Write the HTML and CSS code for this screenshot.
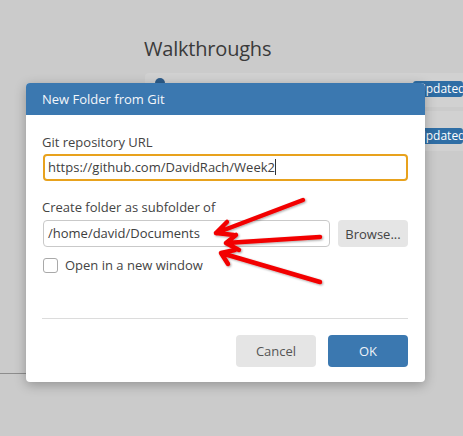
FILE: index.html
```html
<!DOCTYPE html>
<html>
<head>
<meta charset="utf-8">
<link rel="stylesheet" href="styles.css">
</head>
<body>
<div class="page">
  <div class="bg">
    <h1 class="bg-title">Walkthroughs</h1>
    <div class="bg-list">
      <div class="bg-row"><span class="bg-dot"></span><span class="badge">Updated</span></div>
      <div class="bg-row bg-row2"><span class="badge">Updated</span></div>
    </div>
    <div class="bg-rule"></div>
  </div>

  <div class="dialog">
    <div class="dialog-head">New Folder from Git</div>
    <div class="dialog-body">
      <label class="field-label">Git repository URL</label>
      <div class="input focused">https://github.com/DavidRach/Week2<span class="caret"></span></div>
      <label class="field-label second">Create folder as subfolder of</label>
      <div class="row">
        <div class="input path">/home/david/Documents</div>
        <button class="btn browse">Browse...</button>
      </div>
      <div class="check-row">
        <span class="checkbox"></span>
        <span class="check-label">Open in a new window</span>
      </div>
      <div class="sep"></div>
      <div class="actions">
        <button class="btn cancel">Cancel</button>
        <button class="btn ok">OK</button>
      </div>
    </div>
  </div>

  <svg class="arrows" width="463" height="436" viewBox="0 0 463 436">
    <defs>
      <filter id="sh" x="-20%" y="-20%" width="140%" height="140%">
        <feDropShadow dx="1" dy="1" stdDeviation="0.8" flood-color="#000" flood-opacity="0.35"/>
      </filter>
    </defs>
    <g fill="none" stroke="#f20000" stroke-width="4.5" stroke-linecap="round" stroke-linejoin="round" filter="url(#sh)">
      <path d="M303 200 L216 233 M216 233 L227 222 M216 233 L234 235"/>
      <path d="M320 237 L226 243 M226 243 L236 235 M226 243 L239 250"/>
      <path d="M320 282 L221 253 M221 253 L235 250 M221 253 L228 264"/>
    </g>
  </svg>
</div>
</body>
</html>
```

FILE: styles.css
```css
* { box-sizing: border-box; }
html, body { margin: 0; padding: 0; }
body {
  background: #cbcbcb;
  font-family: "Open Sans", "Noto Sans", sans-serif;
  color: #444;
}
.page {
  position: relative;
  width: 463px;
  height: 436px;
  overflow: hidden;
}
.bg {
  padding-top: 36px;
}
.bg-title {
  margin: 0 0 0 144px;
  font-size: 20px;
  font-weight: 400;
  line-height: 26px;
  color: #3a3a3a;
  letter-spacing: -0.2px;
}
.bg-list {
  margin: 11px 0 0 145px;
  display: flex;
  flex-direction: column;
  gap: 4px;
}
.bg-row {
  position: relative;
  height: 34px;
  background: #d1d1d1;
  border-radius: 4px 0 0 4px;
  display: flex;
  justify-content: flex-end;
  align-items: flex-start;
  padding-top: 8px;
}
.bg-row2 {
  height: 40px;
  padding-top: 17px;
}
.bg-dot {
  position: absolute;
  left: 10px;
  top: 5px;
  width: 10px;
  height: 10px;
  border-radius: 50%;
  background: #2d5c8a;
}
.badge {
  background: #2f6ea5;
  color: #fff;
  font-size: 12px;
  line-height: 16px;
  padding: 0 4px;
  border-radius: 3px;
  width: 50px;
  white-space: nowrap;
  overflow: hidden;
}
.bg-rule {
  margin-top: 222px;
  height: 1px;
  width: 120px;
  background: #8d8d8d;
}

.dialog {
  position: absolute;
  left: 26px;
  top: 83px;
  width: 399px;
  height: 299px;
  background: #fff;
  border-radius: 4px;
  overflow: hidden;
  box-shadow: 0 3px 12px rgba(0,0,0,0.28);
}
.dialog-head {
  height: 32px;
  background: #3b78b0;
  color: #f3f6fa;
  font-size: 13px;
  line-height: 32px;
  padding-left: 16px;
}
.dialog-body {
  padding: 18px 17px 0 17px;
  display: flex;
  flex-direction: column;
}
.field-label {
  font-size: 13px;
  line-height: 18px;
  color: #444;
  margin-left: -1px;
}
.field-label.second {
  margin-top: 17px;
}
.input {
  margin-top: 3px;
  height: 27px;
  border: 1px solid #c9c9c9;
  border-radius: 4px;
  font-size: 13px;
  line-height: 25px;
  padding-left: 4px;
  color: #404040;
  white-space: nowrap;
}
.input.focused {
  border: 2px solid #e8a21d;
  line-height: 23px;
  padding-left: 3px;
}
.caret {
  display: inline-block;
  width: 1px;
  height: 16px;
  background: #333;
  vertical-align: -3px;
}
.row {
  display: flex;
  gap: 8px;
  margin-top: 4px;
}
.row .input {
  margin-top: 0;
  width: 287px;
}
.btn {
  border: none;
  border-radius: 4px;
  font-family: inherit;
  font-size: 13px;
  padding: 0;
}
.browse {
  width: 70px;
  height: 27px;
  background: #e5e5e5;
  color: #444;
}
.check-row {
  display: flex;
  align-items: center;
  gap: 7px;
  margin-top: 9px;
  height: 18px;
}
.checkbox {
  width: 15px;
  height: 15px;
  border: 1px solid #a9a9a9;
  border-radius: 3px;
  background: #fff;
}
.check-label {
  font-size: 13px;
  color: #444;
}
.sep {
  margin-top: 44px;
  height: 1px;
  background: #dcdcdc;
  margin-left: -1px;
}
.actions {
  display: flex;
  justify-content: flex-end;
  gap: 12px;
  margin-top: 16px;
}
.cancel, .ok {
  width: 80px;
  height: 32px;
}
.cancel {
  background: #e5e5e5;
  color: #555;
}
.ok {
  background: #3b78b0;
  color: #eef3f8;
}
.arrows {
  position: absolute;
  left: 0;
  top: 0;
  pointer-events: none;
}
```
